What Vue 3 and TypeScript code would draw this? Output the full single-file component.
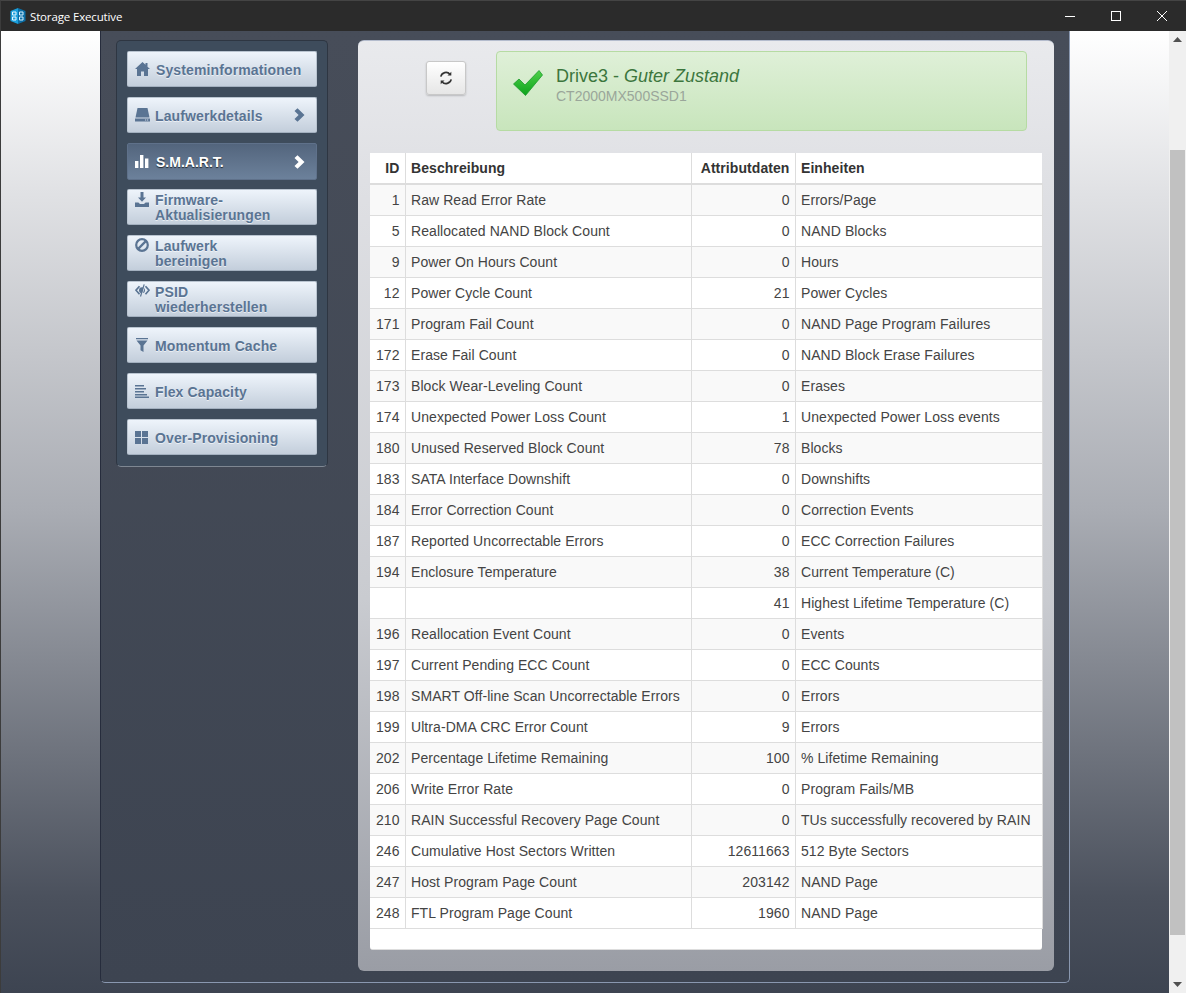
<script setup lang="ts">
interface Row { id: string; name: string; value: string; unit: string }
const rows: Row[] = [
  ['1','Raw Read Error Rate','0','Errors/Page'],
  ['5','Reallocated NAND Block Count','0','NAND Blocks'],
  ['9','Power On Hours Count','0','Hours'],
  ['12','Power Cycle Count','21','Power Cycles'],
  ['171','Program Fail Count','0','NAND Page Program Failures'],
  ['172','Erase Fail Count','0','NAND Block Erase Failures'],
  ['173','Block Wear-Leveling Count','0','Erases'],
  ['174','Unexpected Power Loss Count','1','Unexpected Power Loss events'],
  ['180','Unused Reserved Block Count','78','Blocks'],
  ['183','SATA Interface Downshift','0','Downshifts'],
  ['184','Error Correction Count','0','Correction Events'],
  ['187','Reported Uncorrectable Errors','0','ECC Correction Failures'],
  ['194','Enclosure Temperature','38','Current Temperature (C)'],
  ['','','41','Highest Lifetime Temperature (C)'],
  ['196','Reallocation Event Count','0','Events'],
  ['197','Current Pending ECC Count','0','ECC Counts'],
  ['198','SMART Off-line Scan Uncorrectable Errors','0','Errors'],
  ['199','Ultra-DMA CRC Error Count','9','Errors'],
  ['202','Percentage Lifetime Remaining','100','% Lifetime Remaining'],
  ['206','Write Error Rate','0','Program Fails/MB'],
  ['210','RAIN Successful Recovery Page Count','0','TUs successfully recovered by RAIN'],
  ['246','Cumulative Host Sectors Written','12611663','512 Byte Sectors'],
  ['247','Host Program Page Count','203142','NAND Page'],
  ['248','FTL Program Page Count','1960','NAND Page'],
].map(([id, name, value, unit]) => ({ id, name, value, unit }))

interface Nav { key: string; lines: string[]; arrow?: boolean; active?: boolean }
const nav: Nav[] = [
  { key: 'home', lines: ['Systeminformationen'] },
  { key: 'drive', lines: ['Laufwerkdetails'], arrow: true },
  { key: 'chart', lines: ['S.M.A.R.T.'], arrow: true, active: true },
  { key: 'download', lines: ['Firmware-', 'Aktualisierungen'] },
  { key: 'ban', lines: ['Laufwerk', 'bereinigen'] },
  { key: 'eye', lines: ['PSID', 'wiederherstellen'] },
  { key: 'filter', lines: ['Momentum Cache'] },
  { key: 'align', lines: ['Flex Capacity'] },
  { key: 'grid', lines: ['Over-Provisioning'] },
]
</script>

<template>
  <div class="window">
    <header class="titlebar">
      <svg class="logo" width="16" height="16" viewBox="0 0 16 16">
        <path d="M8 0 L0.500 3 V13 L8 16 Z" fill="#1a9fdc" />
        <path d="M8 0 L15.500 3 V13 L8 16 Z" fill="#0b6ea6" />
        <path d="M2.500 4h3.500v3H2.500zM2.500 9h3.500v3H2.500z" fill="none" stroke="#e8f7ff" stroke-width="1" />
        <path d="M9.500 4H13v3H9.500zM9.500 9H13v3H9.500z" fill="none" stroke="#d5f0ff" stroke-width="1" />
      </svg>
      <span class="title">Storage Executive</span>
      <div class="winctl">
        <svg width="12" height="12" viewBox="0 0 12 12"><path d="M1 6.500h10" stroke="#fff" stroke-width="1" /></svg>
        <svg width="12" height="12" viewBox="0 0 12 12"><rect x="1.500" y="1.500" width="9" height="9" fill="none" stroke="#fff" stroke-width="1" /></svg>
        <svg width="12" height="12" viewBox="0 0 12 12"><path d="M1 1l10 10M11 1L1 11" stroke="#fff" stroke-width="1" /></svg>
      </div>
    </header>
    <div class="body">
      <div class="page">
        <div class="shell">
          <aside class="side">
            <button v-for="n in nav" :key="n.key" class="nav" :class="[`k-${n.key}`, { active: n.active, two: n.lines.length > 1 }]">
              <span class="ic">
                <svg v-if="n.key === 'home'" width="15" height="14" viewBox="0 0 15 14"><path d="M7.500 0 L0 7 H2 V14 H6 V9.500 H9 V14 H13 V7 H15 L12.500 4.700 V1 H10.500 V2.800 Z" /></svg>
                <svg v-else-if="n.key === 'drive'" width="15" height="14" viewBox="0 0 15 14"><path d="M2.500 0H12.500L14.500 9.500H0.500Z" /><path d="M0 10.500H15V13.500H0ZM10 11.500v1h1.200v-1zM12 11.500v1h1.200v-1z" fill-rule="evenodd" /></svg>
                <svg v-else-if="n.key === 'chart'" width="14" height="13" viewBox="0 0 14 13"><path d="M0 6h3.400v7H0zM5 0h3.400v13H5zM10 3.500h3.400V13H10z" /></svg>
                <svg v-else-if="n.key === 'download'" width="14" height="15" viewBox="0 0 14 15"><path d="M5.500 0h3v5.500H11L7 9.800 3 5.500h2.500z" /><path d="M0 10.500h3.400L5 12h4l1.600-1.500H14V15H0z" /></svg>
                <svg v-else-if="n.key === 'ban'" width="15" height="15" viewBox="0 0 15 15"><circle cx="7" cy="7" r="5.800" fill="none" stroke="#5a7493" stroke-width="2.200" /><path d="M2.900 11.100L11.100 2.900" stroke="#5a7493" stroke-width="2.200" /></svg>
                <svg v-else-if="n.key === 'eye'" width="15" height="13" viewBox="0 0 15 13"><path d="M4.500 2.200L1 6.200 4.500 10.200M10.500 2.200L14 6.200 10.500 10.200" fill="none" stroke="#5a7493" stroke-width="1.700" /><circle cx="7" cy="6.200" r="3" /><path d="M10 0.500L6.500 12.500" stroke="#e4ebf3" stroke-width="1" /><path d="M9.200 0.300L5.500 12.500" stroke="#5a7493" stroke-width="1.200" /></svg>
                <svg v-else-if="n.key === 'filter'" width="14" height="14" viewBox="0 0 14 14"><path d="M1 0h12v1.200H1zM1.500 2.500h11L8.500 7.500V14l-3-1.800V7.500z" /></svg>
                <svg v-else-if="n.key === 'align'" width="14" height="13" viewBox="0 0 14 13"><path d="M0 0h9v1.500H0zM0 3h11v1.500H0zM0 6h9v1.500H0zM0 9h12v1.500H0zM0 11.500h14V13H0z" /></svg>
                <svg v-else width="13" height="13" viewBox="0 0 13 13"><path d="M0 0h6v6H0zM7 0h6v6H7zM0 7h6v6H0zM7 7h6v6H7z" /></svg>
              </span>
              <span class="label"><span v-for="l in n.lines" :key="l" class="ln">{{ l }}</span></span>
              <svg v-if="n.arrow" class="arrow" width="11" height="14" viewBox="0 0 11 14"><path d="M3.500 0.200L10.500 7 3.500 13.800 0.500 11 4.600 7 0.500 3Z" /></svg>
            </button>
          </aside>
          <main class="panel">
            <div class="top">
              <button class="refresh" aria-label="Aktualisieren">
                <svg width="14" height="14" viewBox="0 0 14 14" fill="none" stroke="#333" stroke-width="1.600">
                  <path d="M1.800 5.600A5.300 5.300 0 0 1 11 3.300" />
                  <path d="M12.200 8.400A5.300 5.300 0 0 1 3 10.700" />
                  <path d="M12.300 0.800V4.600H8.500Z" fill="#333" stroke="none" />
                  <path d="M1.700 13.200V9.400H5.500Z" fill="#333" stroke="none" />
                </svg>
              </button>
              <div class="alert">
                <svg class="check" width="30" height="26" viewBox="0 0 30 26">
                  <defs>
                    <linearGradient id="chk" x1="0" y1="0" x2="0" y2="1">
                      <stop offset="0" stop-color="#4fd04a" />
                      <stop offset="1" stop-color="#0da31c" />
                    </linearGradient>
                  </defs>
                  <path d="M0.500 14 L6 9 L12 15 L26 0.500 L29.500 5 L12.500 25.500 Z" fill="url(#chk)" stroke="#1c9a2c" stroke-width="0.800" stroke-linejoin="round" />
                </svg>
                <div class="alert-text">
                  <div class="a1">Drive3 - <em>Guter Zustand</em></div>
                  <div class="a2">CT2000MX500SSD1</div>
                </div>
              </div>
            </div>
            <div class="tablewrap">
              <table>
                <colgroup><col class="c1" /><col class="c2" /><col class="c3" /><col class="c4" /></colgroup>
                <thead>
                  <tr><th class="r">ID</th><th>Beschreibung</th><th class="r">Attributdaten</th><th>Einheiten</th></tr>
                </thead>
                <tbody>
                  <tr v-for="(r, i) in rows" :key="i">
                    <td class="r">{{ r.id }}</td><td>{{ r.name }}</td><td class="r">{{ r.value }}</td><td>{{ r.unit }}</td>
                  </tr>
                </tbody>
              </table>
            </div>
          </main>
        </div>
      </div>
      <div class="scrollbar">
        <svg width="9" height="5" viewBox="0 0 9 5"><path d="M4.500 0L9 5H0Z" fill="#505050" /></svg>
        <div class="track"><div class="thumb"></div></div>
        <svg width="9" height="5" viewBox="0 0 9 5"><path d="M0 0H9L4.500 5Z" fill="#505050" /></svg>
      </div>
    </div>
  </div>
</template>

<style>
html, body { margin: 0; padding: 0; overflow: hidden; }
</style>

<style scoped>
* { box-sizing: border-box; }
.window {
  width: 1186px; height: 993px; display: flex; flex-direction: column;
  background: #2b2b2b; border: 1px solid #3c3c3c; border-top-color: #444; border-right-width: 0; border-bottom-width: 0;
  font-family: "Liberation Sans", Arial, sans-serif; overflow: hidden;
}
.titlebar { height: 30px; flex: none; background: #2b2b2b; display: flex; align-items: center; padding-left: 9px; }
.logo { margin-right: 4px; }
.title { font: 11.5px "Open Sans", "Noto Sans", sans-serif; letter-spacing: -0.15px; color: #fff; }
.winctl { margin-left: auto; display: flex; gap: 34px; padding-right: 18px; align-items: center; }
.body { flex: 1; display: flex; min-height: 0; }
.page {
  flex: 1; height: 962px; padding: 0 98px 0 99px;
  background: linear-gradient(#fff 0, #e0e1e4 17%, #a9acb3 50%, #4b515d 90%, #3d4451 100%);
}
.shell {
  height: 952px; width: 970px; display: flex; align-items: flex-start;
  padding: 9px 15px 0 15px;
  background: linear-gradient(#474d59, #3d4451);
  border-left: 1px solid #262c3c; border-right: 1px solid #8a98b0; border-bottom: 1px solid #8a98b0;
  border-radius: 0 0 5px 5px;
}
.side {
  width: 212px; height: 427px; flex: none; padding: 10px 10px 0 10px;
  background: #3e4c5c; border: 1px solid #2e3642; border-bottom-color: #7e8792; border-radius: 5px;
  display: flex; flex-direction: column;
}
.nav {
  width: 190px; height: 36px; flex: none; margin-bottom: 10px; padding: 0 0 0 7px;
  display: flex; align-items: center; text-align: left;
  border: 1px solid #b9c4d0; border-bottom-color: #a3b0bf; border-radius: 2px;
  background: linear-gradient(#eef4fb, #c3cedb);
  color: #5a7493; fill: #5a7493;
  font: bold 14px/15px "Liberation Sans", Arial, sans-serif; letter-spacing: 0.12px;
  text-shadow: 0 1px 0 rgba(255,255,255,.6);
}
.nav.active {
  height: 37px; margin-bottom: 9px;
  background: linear-gradient(#53657d, #6c819b); border-color: #5f718a;
  color: #fff; fill: #fff; letter-spacing: 0; text-shadow: 0 1px 1px rgba(0,0,0,.7);
}
.nav.two { align-items: flex-start; padding-top: 2px; }
.ic { width: 20px; flex: none; display: flex; }
.k-home .ic, .k-chart .ic { width: 21px; }
.ic svg { display: block; }
.label { flex: 1; display: flex; flex-direction: column; margin-top: 2px; }
.nav.two .label { margin-top: 1px; }
.ln { display: block; white-space: nowrap; }
.arrow { margin-right: 11px; flex: none; }
.panel {
  width: 696px; height: 931px; margin-left: 30px; flex: none; border-radius: 6px; padding: 10px 12px 0 12px;
  background: linear-gradient(#e9eaed, #dfe0e4 15%, #c9cbd0 60%, #9a9da5 100%);
  border-top: 1px solid #b4bccd;
}
.top { display: flex; align-items: flex-start; height: 102px; }
.refresh {
  width: 40px; height: 34px; margin: 10px 0 0 56px; padding: 0; flex: none;
  display: flex; align-items: center; justify-content: center;
  background: linear-gradient(#fff, #e6e6e6); border: 1px solid #c8c8c8; border-radius: 3px;
  box-shadow: 0 1px 2px rgba(0,0,0,.2);
}
.alert {
  width: 531px; height: 80px; margin-left: 30px; flex: none; display: flex; align-items: flex-start;
  padding: 16px 0 0 16px; border: 1px solid #b6dba3; border-radius: 4px;
  background: linear-gradient(#dff0d8, #c8e5bc);
}
.check { margin-top: 2px; flex: none; }
.alert-text { margin-left: 13px; }
.a1 { font-size: 18px; line-height: 20px; color: #3c763d; margin-top: -2px; }
.a2 { font-size: 14px; line-height: 20px; color: #9aa69a; }
.tablewrap { width: 672px; height: 797px; background: #fff; border-radius: 0 0 3px 3px; border-bottom: 1px solid #ddd; }
table { border-collapse: collapse; table-layout: fixed; width: 672px; font-size: 14px; letter-spacing: 0.07px; color: #333; }
.c1 { width: 35px; } .c2 { width: 286px; } .c3 { width: 104px; } .c4 { width: 247px; }
th { height: 31px; padding: 0 5px 0 5.5px; font-weight: bold; text-align: left; border-bottom: 2px solid #ddd; border-left: 1px solid #ddd; background: #fff; color: #333; }
td { height: 31px; padding: 0 5px 0 5.5px; border-bottom: 1px solid #ddd; border-left: 1px solid #ddd; color: #444; white-space: nowrap; overflow: hidden; }
th:first-child, td:first-child { border-left: 0; }
td:last-child { border-right: 1px solid #ddd; }
tbody tr:nth-child(odd) td { background: #f9f9f9; }
.r { text-align: right; }
.scrollbar { width: 17px; flex: none; height: 962px; background: #f0f0f0; display: flex; flex-direction: column; align-items: center; padding: 6px 0 6px; justify-content: space-between; }
.track { flex: 1; width: 100%; padding: 0 1px; }
.thumb { margin-top: 108px; height: 785px; background: #c1c1c1; width: 100%; }
</style>
